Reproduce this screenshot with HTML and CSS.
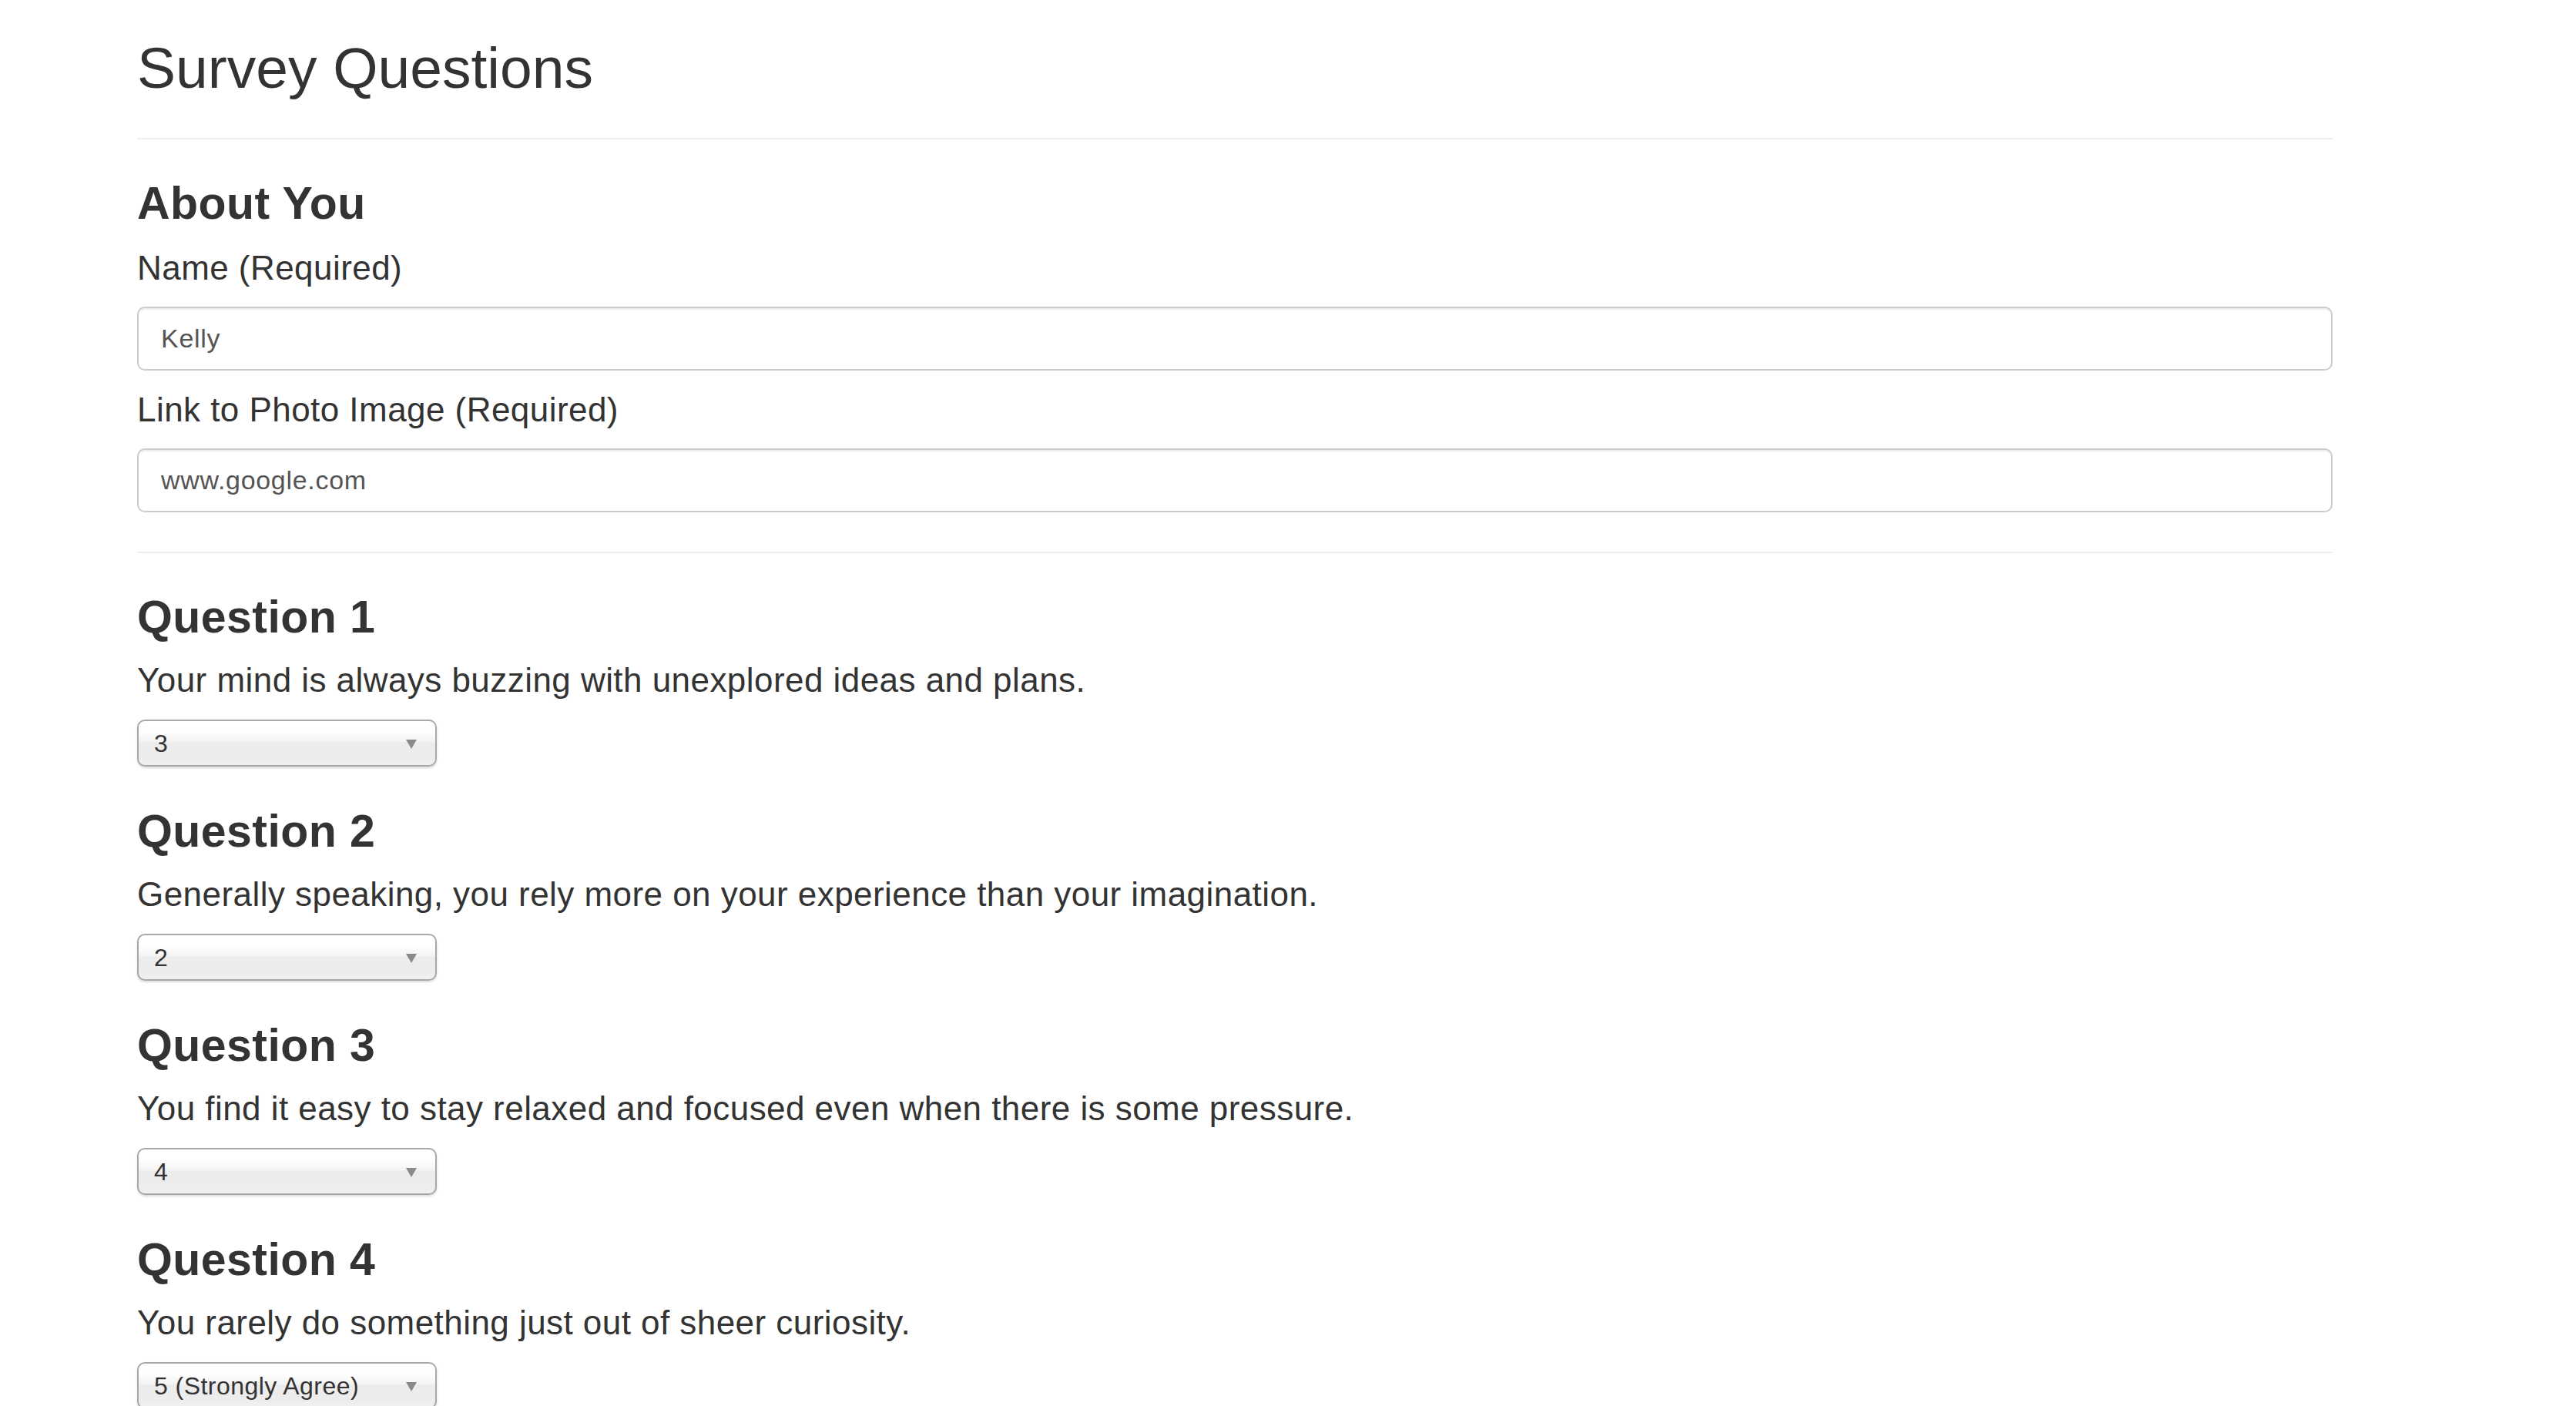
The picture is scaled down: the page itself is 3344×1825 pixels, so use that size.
FILE: index.html
```html
<!DOCTYPE html>
<html lang="en">
<head>
<meta charset="utf-8">
<title>Survey Questions</title>
<link rel="stylesheet" href="styles.css">
</head>
<body>
<div class="page">
  <h1 class="title">Survey Questions</h1>
  <hr class="rule">
  <section class="about">
    <h2 class="heading">About You</h2>
    <label class="label" for="name">Name (Required)</label>
    <input class="text-input" id="name" type="text" value="Kelly">
    <label class="label label-after-input" for="photo">Link to Photo Image (Required)</label>
    <input class="text-input" id="photo" type="text" value="www.google.com">
  </section>
  <hr class="rule rule-after-input">
  <section class="question question-first">
    <h2 class="heading">Question 1</h2>
    <p class="label">Your mind is always buzzing with unexplored ideas and plans.</p>
    <div class="select-wrap">
      <select class="select">
        <option>1 (Strongly Disagree)</option>
        <option>2</option>
        <option selected>3</option>
        <option>4</option>
        <option>5 (Strongly Agree)</option>
      </select>
    </div>
  </section>
  <section class="question">
    <h2 class="heading">Question 2</h2>
    <p class="label">Generally speaking, you rely more on your experience than your imagination.</p>
    <div class="select-wrap">
      <select class="select">
        <option>1 (Strongly Disagree)</option>
        <option selected>2</option>
        <option>3</option>
        <option>4</option>
        <option>5 (Strongly Agree)</option>
      </select>
    </div>
  </section>
  <section class="question">
    <h2 class="heading">Question 3</h2>
    <p class="label">You find it easy to stay relaxed and focused even when there is some pressure.</p>
    <div class="select-wrap">
      <select class="select">
        <option>1 (Strongly Disagree)</option>
        <option>2</option>
        <option>3</option>
        <option selected>4</option>
        <option>5 (Strongly Agree)</option>
      </select>
    </div>
  </section>
  <section class="question">
    <h2 class="heading">Question 4</h2>
    <p class="label">You rarely do something just out of sheer curiosity.</p>
    <div class="select-wrap">
      <select class="select">
        <option>1 (Strongly Disagree)</option>
        <option>2</option>
        <option>3</option>
        <option>4</option>
        <option selected>5 (Strongly Agree)</option>
      </select>
    </div>
  </section>
</div>
</body>
</html>
```

FILE: styles.css
```css
html, body {
  margin: 0;
  padding: 0;
  background: #ffffff;
}

body {
  font-family: "Liberation Sans", Arial, sans-serif;
  color: #333333;
}

.page {
  display: flex;
  flex-direction: column;
  width: 2850px;
  margin-left: 178px;
  padding-top: 47px;
  padding-bottom: 200px;
}

.title {
  margin: 0;
  font-size: 75px;
  line-height: 82px;
  font-weight: 400;
  color: #333333;
}

.rule {
  margin: 50px 0 0 0;
  height: 0;
  border: 0;
  border-top: 2px solid #eeeeee;
}

.rule-after-input {
  margin-top: 51px;
}

.about,
.question {
  display: flex;
  flex-direction: column;
  align-items: flex-start;
  margin-top: 51px;
}

.about {
  align-items: stretch;
}

.question {
  margin-top: 52px;
}

.question-first {
  margin-top: 51px;
}

.heading {
  margin: 0;
  font-size: 59px;
  line-height: 65px;
  font-weight: 700;
  letter-spacing: 0.45px;
  color: #333333;
}

.label {
  display: block;
  margin: 26px 0 0 0;
  font-size: 44px;
  line-height: 50px;
  font-weight: 400;
  letter-spacing: 0.45px;
  color: #333333;
}

.question .label {
  margin-top: 24px;
}

.label-after-input {
  margin-top: 26px;
}

.text-input {
  display: block;
  box-sizing: border-box;
  width: 100%;
  height: 83px;
  margin: 25px 0 0 0;
  padding: 0 29px;
  border: 2px solid #cccccc;
  border-radius: 10px;
  background: #ffffff;
  box-shadow: inset 0 2px 2px rgba(0, 0, 0, 0.075);
  font-family: "Liberation Sans", Arial, sans-serif;
  font-size: 34px;
  letter-spacing: 0.7px;
  color: #555555;
  outline: none;
}

.select-wrap {
  position: relative;
  margin-top: 26px;
  width: 389px;
  height: 61px;
}

.select-wrap::after {
  content: "";
  position: absolute;
  top: 26px;
  right: 26px;
  width: 0;
  height: 0;
  border-left: 7.5px solid transparent;
  border-right: 7.5px solid transparent;
  border-top: 12px solid #8a8a8a;
  pointer-events: none;
}

.select {
  -webkit-appearance: none;
  appearance: none;
  display: block;
  box-sizing: border-box;
  width: 389px;
  height: 61px;
  margin: 0;
  padding: 0 50px 0 20px;
  border: 2px solid #a8a8a8;
  border-radius: 10px;
  background: linear-gradient(to bottom, #ffffff 0%, #ffffff 22%, #f4f4f4 46%, #ececec 50%, #ededed 85%, #f1f1f1 100%);
  box-shadow: 0 2px 3px rgba(0, 0, 0, 0.14);
  font-family: "Liberation Sans", Arial, sans-serif;
  font-size: 32px;
  letter-spacing: 0.45px;
  color: #333333;
  outline: none;
}
```
